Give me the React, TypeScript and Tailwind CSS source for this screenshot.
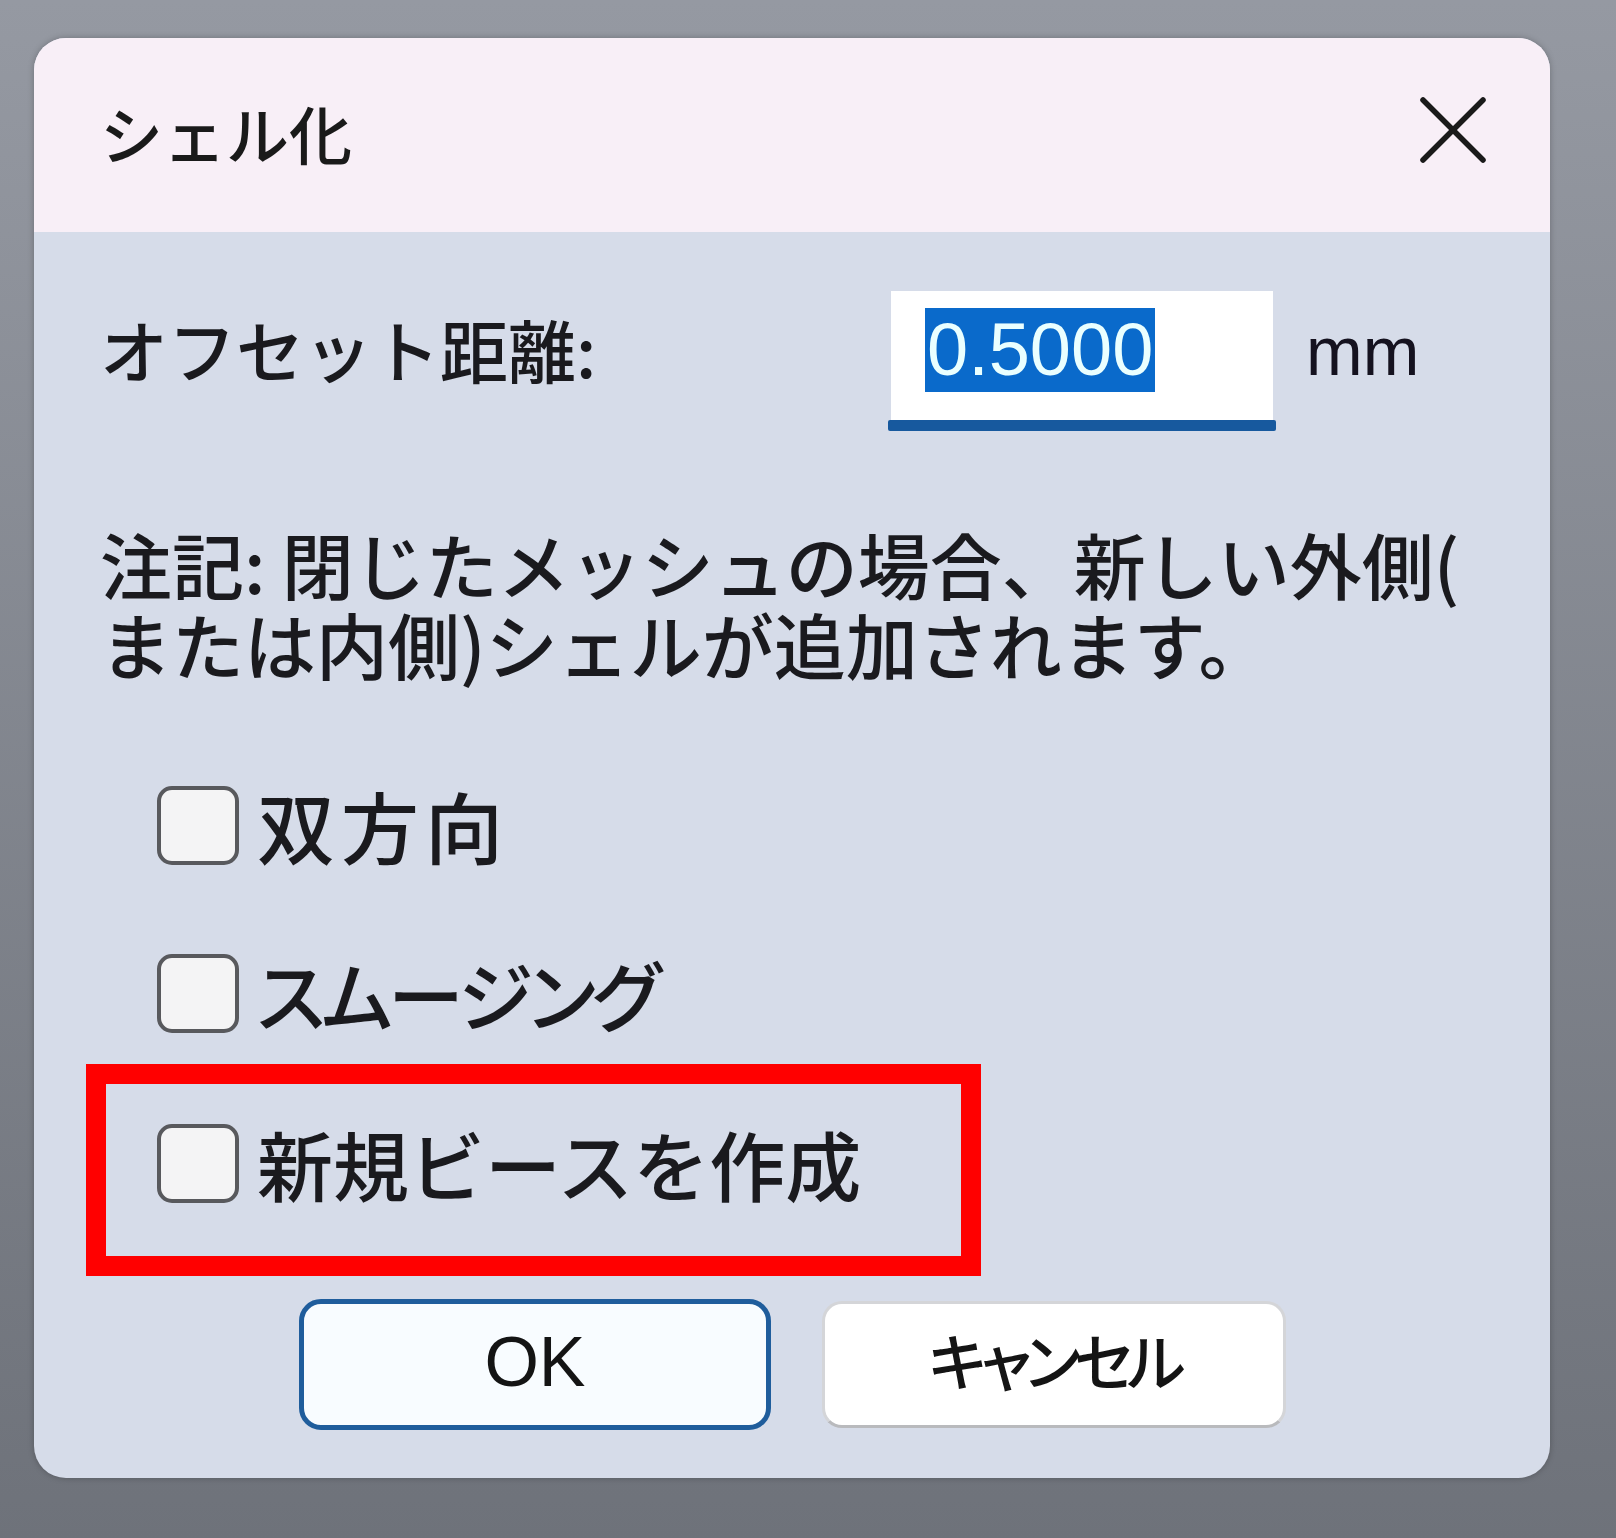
import React from "react";

const jp = "font-['Noto_Sans_CJK_JP','Noto_Sans',sans-serif]";

function Checkbox({ label, className }: { label: string; className?: string }) {
  return (
    <div className="flex items-center h-[80px]">
      <div className="w-[82px] h-[79px] rounded-[15px] border-[4px] border-[#58595d] bg-[#f4f4f5] shrink-0" />
      <span className={"ml-[18px] whitespace-nowrap text-[#1a1a1e] font-medium " + (className ?? "")}>{label}</span>
    </div>
  );
}

export default function App() {
  return (
    <div className="w-[1616px] h-[1538px] bg-gradient-to-b from-[#9599a2] to-[#6e727a] pt-[38px] pl-[34px] overflow-hidden">
      <div className={"relative w-[1516px] h-[1440px] rounded-[32px] overflow-hidden bg-[#d6dce9] flex flex-col shadow-[0_0_6px_rgba(0,0,0,0.25)] " + jp}>
        {/* Title bar */}
        <div className="h-[194px] bg-[#f8eff7] flex items-center justify-between pl-[66px] pr-[64px] shrink-0">
          <span className="text-[63px] leading-none text-[#1a1a1a] font-medium -mt-[8px]">シェル化</span>
          <svg width="66" height="66" viewBox="0 0 66 66" className="-mt-[10px]">
            <line x1="3" y1="3" x2="63" y2="63" stroke="#1a1a1a" strokeWidth="5.5" strokeLinecap="round" />
            <line x1="63" y1="3" x2="3" y2="63" stroke="#1a1a1a" strokeWidth="5.5" strokeLinecap="round" />
          </svg>
        </div>

        {/* Body */}
        <div className="flex flex-col pl-[66px]">
          {/* Offset row */}
          <div className="flex items-start mt-[59px]">
            <div className="w-[791px] h-[129px] flex items-center pb-[14px]">
              <span className="text-[68px] leading-none text-[#1a1a1e] font-medium whitespace-nowrap">オフセット距離:</span>
            </div>
            <div className="flex flex-col w-[388px] -ml-[3px]">
              <div className="h-[129px] bg-white mx-[3px] flex items-center pl-[34px] pb-[12px]">
                <span className="bg-[#0a6acb] text-[#eaffff] font-['Liberation_Sans',sans-serif] text-[74px] leading-[84px] px-[2px]">0.5000</span>
              </div>
              <div className="h-[11px] bg-[#17599e] rounded-[2px]" />
            </div>
            <div className="h-[129px] flex items-center ml-[30px] pb-[10px]">
              <span className="font-['Liberation_Sans',sans-serif] text-[68px] leading-none text-[#15121f]">mm</span>
            </div>
          </div>

          {/* Note */}
          <div className="mt-[92px] text-[72px] leading-[80px] text-[#1a1a1e] font-medium whitespace-nowrap">
            <div>注記: 閉じたメッシュの場合、新しい外側(</div>
            <div>または内側)シェルが追加されます。</div>
          </div>

          {/* Checkboxes */}
          <div className="flex flex-col pl-[57px] mt-[102px]">
            <Checkbox label="双方向" className="text-[78px] leading-none tracking-[6px]" />
            <div className="mt-[88px]">
              <Checkbox label="スムージング" className="text-[76px] leading-none tracking-[-4px] [font-feature-settings:'palt']" />
            </div>
            <div className="mt-[90px]">
              <Checkbox label="新規ビースを作成" className="text-[76px] leading-none" />
            </div>
          </div>

          {/* Buttons */}
          <div className="flex mt-[96px] pl-[199px] gap-[51px]">
            <button className="w-[472px] h-[131px] rounded-[22px] border-[5px] border-[#1f5d9c] bg-[#f8fcff] flex items-center justify-center">
              <span className="font-['Liberation_Sans',sans-serif] text-[70px] leading-none text-[#141414] pb-[6px]">OK</span>
            </button>
            <button className="w-[464px] h-[127px] mt-[2px] rounded-[20px] border-[3px] border-[#d4d5d8] border-b-[#b9babd] bg-white flex items-center justify-center">
              <span className="text-[62px] leading-none text-[#141414] font-medium [font-feature-settings:'palt'] tracking-[-6px] pb-[12px]">キャンセル</span>
            </button>
          </div>
        </div>

        {/* Red highlight annotation */}
        <div className="absolute left-[52px] top-[1026px] w-[895px] h-[212px] border-[20px] border-[#ff0000]" />
      </div>
    </div>
  );
}
